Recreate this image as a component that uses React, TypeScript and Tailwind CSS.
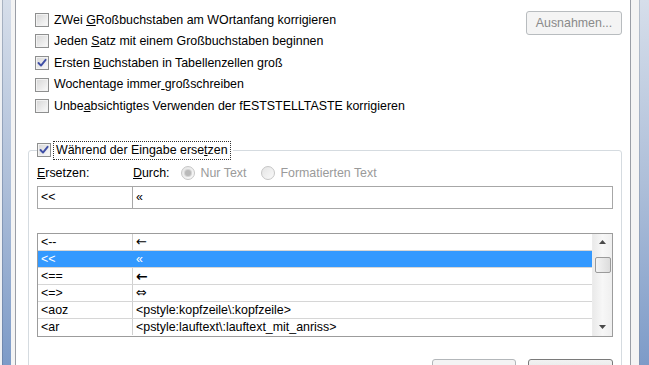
import React from "react";
import clsx from "clsx";

const options = [
  { label: <>ZWei <u>G</u>Roßbuchstaben am WOrtanfang korrigieren</>, checked: false },
  { label: <>Jeden <u>S</u>atz mit einem Großbuchstaben beginnen</>, checked: false },
  { label: <>Ersten <u>B</u>uchstaben in Tabellenzellen groß</>, checked: true },
  { label: <>Wochentage immer<u> </u>großschreiben</>, checked: false },
  { label: <>Unbe<u>a</u>bsichtigtes Verwenden der fESTSTELLTASTE korrigieren</>, checked: false },
];

const entries = [
  { key: "<--", value: "←", symbol: true },
  { key: "<<", value: "«", selected: true },
  { key: "<==", value: "←", symbol: true, bold: true },
  { key: "<=>", value: "⇔", symbol: true },
  { key: "<aoz", value: "<pstyle:kopfzeile\\:kopfzeile>" },
  { key: "<ar", value: "<pstyle:lauftext\\:lauftext_mit_anriss>" },
];

function CheckBox({ checked }: { checked?: boolean }) {
  return (
    <span className="flex w-[14px] h-[14px] shrink-0 border border-[#8e8f8f] bg-gradient-to-br from-[#d6d6d6] to-[#fbfbfb] shadow-[inset_0_0_0_1px_#f2f2f2]">
      {checked && (
        <svg viewBox="0 0 12 12" className="w-full h-full">
          <path d="M2.5 6 L5 8.6 L9.6 2.8" fill="none" stroke="#3f4fa6" strokeWidth="1.9" strokeLinecap="round" strokeLinejoin="round" />
        </svg>
      )}
    </span>
  );
}

function Radio({ checked }: { checked?: boolean }) {
  return (
    <span className="flex items-center justify-center w-[14px] h-[14px] shrink-0 rounded-full border border-[#c6c6c6] bg-gradient-to-br from-[#e4e4e4] to-[#fafafa]">
      {checked && <span className="w-[6px] h-[6px] rounded-full bg-[#b9b9b9] ring-1 ring-[#d4d4d4]" />}
    </span>
  );
}

export default function App() {
  return (
    <div className="w-[649px] h-[365px] overflow-hidden flex bg-[#f0f0f0] font-['Liberation_Sans',Arial,sans-serif] text-[12.4px] text-black leading-none">
      {/* window frame, left */}
      <div className="flex w-[11px] shrink-0">
        <div className="w-[2px] bg-[#eef0f3]" />
        <div className="w-[1px] bg-gradient-to-b from-[#a9b3c2] to-[#6d86ad]" />
        <div className="w-[8px] bg-gradient-to-b from-[#d6deea] via-[#aebfd9] to-[#7d9bc8]" />
      </div>
      <div className="w-[4px] shrink-0 bg-[#f4f4f4]" />

      {/* tab page */}
      <div className="w-[616px] shrink-0 flex flex-col border-x border-[#9a9ea6] bg-white">
        <div className="mt-[6px] h-px ml-[19px] mr-[8px] bg-[#dadfe4]" />

        <div className="flex mt-[3px] mr-[8px]">
          <div className="flex-1 flex flex-col ml-[19px]">
            {options.map((o, i) => (
              <div key={i} className="flex items-center gap-[5px] h-[21.6px]">
                <CheckBox checked={o.checked} />
                <span>{o.label}</span>
              </div>
            ))}
          </div>
          <div className="mt-[2px] w-[96px] h-[24px] flex items-center justify-center rounded-[3px] border border-[#b8bcbf] bg-[#f4f4f4] text-[#8a8a8a]">
            Ausnahmen...
          </div>
        </div>

        <fieldset className="mt-[24px] ml-[12px] mr-[8px] border border-[#d5dbe0] rounded-[3px] px-[8px] pb-[20px]">
          <legend className="flex items-center h-[19px] pr-[2px]">
            <CheckBox checked />
            <span className="ml-[2px] h-[19px] flex items-center px-[2px] border border-dotted border-[#333]">
              Während der Eingabe erse<u>t</u>zen
            </span>
          </legend>

          <div className="flex items-center h-[18px] mt-[4px]">
            <span className="w-[96px]"><u>E</u>rsetzen:</span>
            <span><u>D</u>urch:</span>
            <span className="ml-[11px] flex items-center gap-[6px] text-[#9a9a9a]">
              <Radio checked />
              Nur Text
            </span>
            <span className="ml-[15px] flex items-center gap-[5px] text-[#9a9a9a]">
              <Radio />
              Formatierten Text
            </span>
          </div>

          <div className="flex h-[23px] mt-[4px]">
            <div className="w-[96px] flex items-center pl-[3px] border border-[#a7a7a7]">&lt;&lt;</div>
            <div className="flex-1 flex items-center pl-[3px] border border-l-0 border-[#a7a7a7]">«</div>
          </div>

          <div className="flex mt-[24px] border border-[#9c9c9c]">
            <div className="flex-1 flex flex-col">
              {entries.map((e, i) => (
                <div
                  key={i}
                  className={clsx(
                    "flex h-[17px] border-b",
                    i === entries.length - 1 ? "border-transparent" : "border-[#d6d6d6]",
                    e.selected && "bg-[#3399ff] text-white"
                  )}
                >
                  <div className={clsx("w-[95px] flex items-center pl-[3px] border-r", e.selected ? "border-[#3399ff]" : "border-[#d0d0d0]")}>
                    {e.key}
                  </div>
                  <div
                    className={clsx(
                      "flex-1 flex items-center pl-[3px]",
                      e.symbol && "font-['DejaVu_Sans',sans-serif] text-[13px]",
                      e.bold && "font-bold text-[14px]"
                    )}
                  >
                    {e.value}
                  </div>
                </div>
              ))}
            </div>
            <div className="w-[20px] flex flex-col bg-gradient-to-r from-[#eaeaea] via-[#f7f7f7] to-[#efefef] border-l border-[#ececec]">
              <div className="h-[17px] flex items-center justify-center">
                <svg width="7" height="4" viewBox="0 0 7 4"><path d="M0 4 L3.5 0 L7 4 Z" fill="#4a4a4a" /></svg>
              </div>
              <div className="flex-1 flex flex-col items-center">
                <div className="mt-[6px] w-[16px] h-[16px] rounded-[2px] border border-[#9b9b9b] bg-gradient-to-r from-[#f4f4f4] to-[#dcdcdc]" />
              </div>
              <div className="h-[17px] flex items-center justify-center">
                <svg width="7" height="4" viewBox="0 0 7 4"><path d="M0 0 L7 0 L3.5 4 Z" fill="#4a4a4a" /></svg>
              </div>
            </div>
          </div>

          <div className="flex justify-end gap-[12px] mt-[22px]">
            <div className="w-[84px] h-[23px] rounded-[3px] border border-[#b3b7ba] bg-[#f4f4f4]" />
            <div className="w-[85px] h-[23px] rounded-[3px] border border-[#7a7a7a] bg-gradient-to-b from-[#f2f2f2] to-[#dcdcdc]" />
          </div>
        </fieldset>
      </div>

      {/* window frame, right */}
      <div className="w-[8px] shrink-0 bg-[#f4f4f4]" />
      <div className="flex w-[10px] shrink-0">
        <div className="w-[1px] bg-gradient-to-b from-[#b7c0cc] to-[#7f93b3]" />
        <div className="w-[9px] bg-gradient-to-b from-[#d6deea] via-[#aebfd9] to-[#7d9bc8]" />
      </div>
    </div>
  );
}
